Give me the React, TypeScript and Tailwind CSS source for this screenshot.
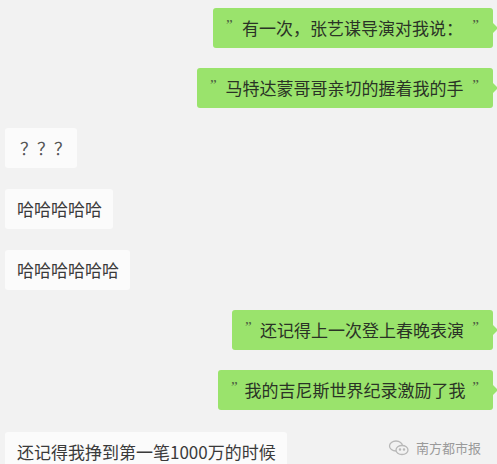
import React from "react";

const font = { fontFamily: '"Noto Sans CJK SC", "Noto Sans", sans-serif' };

function Quote() {
    return <span className="self-start mt-[10px] text-[15px] leading-none text-[#4a5a40]" style={{ fontFamily: '"Liberation Serif", serif' }}>”</span>;
}

function GreenBubble({ text, width }: { text: string; width: string }) {
    return (
        <div className="flex justify-end">
            <div className={`relative flex h-[40px] items-center justify-between rounded-[3px] bg-[#9ae36c] pl-[13px] pr-[14px] ${width}`}>
                <Quote />
                <span className="text-[17px] text-[#2a3326]">{text}</span>
                <Quote />
                <div className="absolute right-[-5px] top-[14px] h-0 w-0 border-y-[6px] border-l-[6px] border-y-transparent border-l-[#9ae36c]" />
            </div>
        </div>
    );
}

function WhiteBubble({ text, className }: { text: string; className: string }) {
    return (
        <div className={`flex h-[40px] items-center rounded-[3px] bg-[#fbfbfb] text-[17px] text-[#3a3a3a] ${className}`}>
            {text}
        </div>
    );
}

function WechatIcon() {
    return (
        <svg width="22" height="18" viewBox="0 0 22 18" fill="none" stroke="#b8b8b8" strokeWidth="1.3">
            <ellipse cx="8" cy="7" rx="6.5" ry="5" />
            <ellipse cx="14" cy="11" rx="6" ry="4.5" fill="#f2f2f2" />
            <circle cx="12" cy="10.5" r="0.6" fill="#b8b8b8" />
            <circle cx="16" cy="10.5" r="0.6" fill="#b8b8b8" />
        </svg>
    );
}

export default function App() {
    return (
        <div className="h-[464px] w-[497px] overflow-hidden bg-[#f2f2f2] pt-[8px]" style={font}>
            <div className="flex flex-col gap-[20px] pr-[4px]">
                <GreenBubble text="有一次，张艺谋导演对我说：" width="w-[280px]" />
                <GreenBubble text="马特达蒙哥哥亲切的握着我的手" width="w-[296px]" />
                <div className="pl-[5px]">
                    <WhiteBubble text="？？？" className="w-[72px] pl-[15px] text-[#555]" />
                </div>
                <div className="pl-[5px]">
                    <WhiteBubble text="哈哈哈哈哈" className="w-[108px] pl-[12px] mt-[1px]" />
                </div>
                <div className="pl-[5px]">
                    <WhiteBubble text="哈哈哈哈哈哈" className="w-[125px] pl-[12px] mt-[1px]" />
                </div>
                <GreenBubble text="还记得上一次登上春晚表演" width="w-[261px]" />
                <GreenBubble text="我的吉尼斯世界纪录激励了我" width="w-[275px]" />
                <div className="flex items-center justify-between pl-[5px]">
                    <WhiteBubble text="还记得我挣到第一笔1000万的时候" className="w-[282px] pl-[12px] mt-[2px]" />
                    <div className="mr-[12px] mt-[-6px] flex items-center gap-[6px] text-[13px] text-[#9a9a9a]">
                        <WechatIcon />
                        <span>南方都市报</span>
                    </div>
                </div>
            </div>
        </div>
    );
}
